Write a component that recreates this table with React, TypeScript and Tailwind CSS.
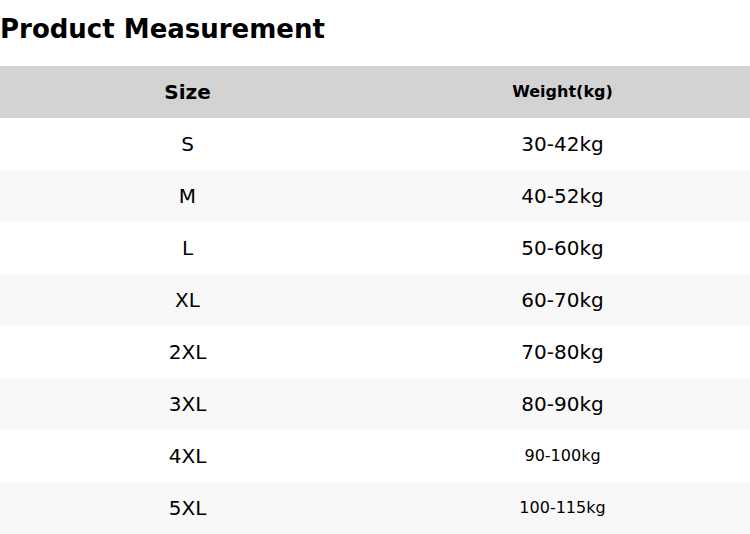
const rows = [
  { size: "S", weight: "30-42kg" },
  { size: "M", weight: "40-52kg" },
  { size: "L", weight: "50-60kg" },
  { size: "XL", weight: "60-70kg" },
  { size: "2XL", weight: "70-80kg" },
  { size: "3XL", weight: "80-90kg" },
  { size: "4XL", weight: "90-100kg", small: true },
  { size: "5XL", weight: "100-115kg", small: true },
]

export default function App() {
  return (
    <div className="bg-white text-black font-['DejaVu_Sans',sans-serif] w-[750px]">
      <h2 className="font-bold leading-[30px] pb-[22px] pt-[14px] text-[26px]">Product Measurement</h2>

      <table className="border-collapse table-fixed w-full">
        <thead>
          <tr className="bg-[#d3d3d3] h-[52px]">
            <th className="font-bold text-[20px]">Size</th>
            <th className="font-bold text-[16px]">Weight(kg)</th>
          </tr>
        </thead>
        <tbody>
          {rows.map((row, i) => (
            <tr className={i % 2 === 1 ? "bg-[#f8f8f8] h-[52px]" : "bg-white h-[52px]"} key={row.size}>
              <td className="text-center text-[20px]">{row.size}</td>
              <td className={row.small ? "text-center text-[16px]" : "text-center text-[20px]"}>{row.weight}</td>
            </tr>
          ))}
        </tbody>
      </table>
    </div>
  )
}
